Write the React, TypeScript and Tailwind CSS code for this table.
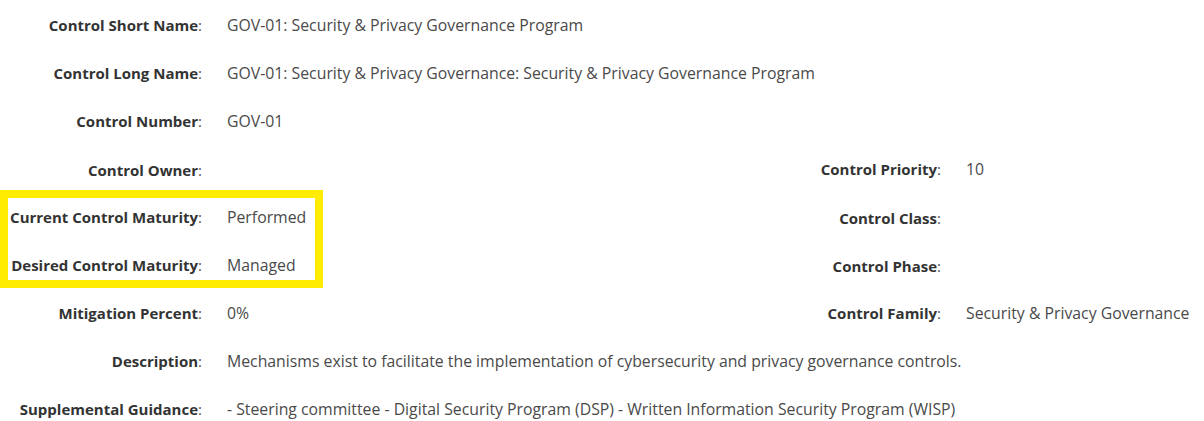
import React from "react";

type Field = { label: string; value?: string };

const rows: { left: Field; right?: Field }[] = [
  { left: { label: "Control Short Name", value: "GOV-01: Security & Privacy Governance Program" } },
  {
    left: {
      label: "Control Long Name",
      value: "GOV-01: Security & Privacy Governance: Security & Privacy Governance Program",
    },
  },
  { left: { label: "Control Number", value: "GOV-01" } },
  { left: { label: "Control Owner" }, right: { label: "Control Priority", value: "10" } },
  { left: { label: "Current Control Maturity", value: "Performed" }, right: { label: "Control Class" } },
  { left: { label: "Desired Control Maturity", value: "Managed" }, right: { label: "Control Phase" } },
  {
    left: { label: "Mitigation Percent", value: "0%" },
    right: { label: "Control Family", value: "Security & Privacy Governance" },
  },
  {
    left: {
      label: "Description",
      value: "Mechanisms exist to facilitate the implementation of cybersecurity and privacy governance controls.",
    },
  },
  {
    left: {
      label: "Supplemental Guidance",
      value: "- Steering committee - Digital Security Program (DSP) - Written Information Security Program (WISP)",
    },
  },
];

const Pair = ({ field, wide }: { field: Field; wide?: boolean }) => {
  return (
    <div className={`flex items-baseline ${wide ? "w-[739px]" : "flex-1"}`}>
      <div className="w-[202px] shrink-0 text-right text-[15px] text-[#333]">
        <span className="font-bold">{field.label}</span>
        <span className="text-[#555]">:</span>
      </div>
      <div className="ml-[25px] whitespace-nowrap text-[15.8px] text-[#4a4a4a]">{field.value}</div>
    </div>
  );
};

export default function App() {
  return (
    <div
      className="relative w-[1204px] h-[421px] bg-white pt-[2px]"
      style={{ fontFamily: "'Open Sans', Lato, sans-serif" }}
    >
      {rows.map((row, i) => (
        <div key={i} className="flex h-12 items-center">
          <Pair field={row.left} wide={!!row.right} />
          {row.right && <Pair field={row.right} />}
        </div>
      ))}
      <div className="pointer-events-none absolute left-0 top-[190px] h-[98px] w-[323px] border-8 border-[#ffec00]" />
    </div>
  );
}
